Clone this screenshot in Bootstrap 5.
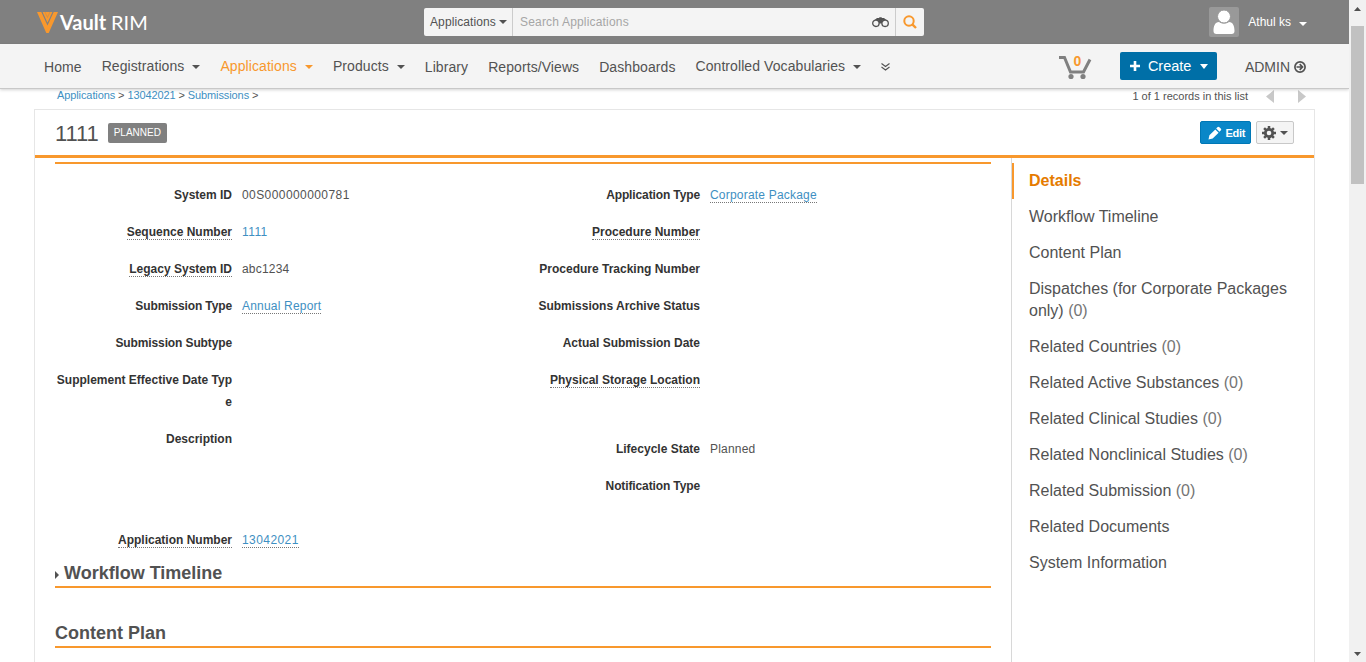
<!DOCTYPE html>
<html lang="en">
<head>
<meta charset="utf-8">
<meta name="viewport" content="width=device-width, initial-scale=1">
<title>Vault RIM - 1111</title>
<link href="https://cdn.jsdelivr.net/npm/bootstrap@5.3.0/dist/css/bootstrap.min.css" rel="stylesheet">
<style>
  body{font-family:"Liberation Sans",Arial,sans-serif;font-size:12px;line-height:22px;color:#525252;height:100vh;overflow:hidden;background:#fff}
  a{color:#3e8fc2;text-decoration:none}
  svg{display:block;flex:none}
  .caret{width:0;height:0;border:4px solid transparent;border-top-color:currentColor;border-bottom:0;flex:none}
  .topbar{height:44px;background:#808080;padding:0 42px 0 37px}
  .logo-text{font:700 20px/24px Lato,sans-serif;color:#fff;margin-left:2px;width:90px;white-space:nowrap}
  .logo-text span{font-weight:400}
  .search-box{width:500px;height:28px;background:#f4f4f4;border-radius:2px;margin-left:274px}
  .search-type{width:89px;padding-left:6px;border-right:1px solid #ccc;letter-spacing:.1px}
  .search-type .caret{margin-left:3px}
  .search-hint{color:#a6a6a6;padding-left:7px;letter-spacing:.18px}
  .search-go{width:29px;border-left:1px solid #ccc}
  .binoculars{margin-right:6px}
  .avatar{width:30px;height:30px;background:#999;border-radius:2px;overflow:hidden;margin-right:9px}
  .mainnav{height:45px;background:#f4f4f4;border-bottom:1px solid #c8c8c8;box-shadow:0 1px 3px rgba(0,0,0,.18);padding:2px 43px 0 44px;font-size:14px;position:relative}
  .mainnav .nav{column-gap:20px;letter-spacing:.08px}
  .mainnav .nav-link{padding:0;color:#525252;line-height:20px}
  .mainnav .has-menu{margin-top:-2px}
  .mainnav .has-menu .caret{margin-left:8px;margin-top:2px}
  .mainnav .nav-link.active{color:#f8982d}
  .create{height:28px;width:97px;background:#006fa7;color:#fff;border:0;border-radius:2px;font-size:14.5px;line-height:20px;padding:0 9px 0 10px;margin:-2px 28px 0}
  .create .caret{border-width:5px 4.500px 0}
  .crumbs{font-size:11px;height:20px;line-height:14px;padding:0 43px 0 57px}
  .crumbs nav{letter-spacing:-.1px;margin-top:-1px}
  .crumbs svg{margin-left:18px}
  .record{margin:0 34px;border:1px solid #e6e6e6;border-bottom:0}
  .record-head{height:48px;border-bottom:3px solid #f8982d;padding:0 20px}
  .record-head h1{font-size:22px;line-height:26px;font-weight:400;margin:2px 0 0;letter-spacing:-.1px}
  .state{background:#808080;color:#fff;font-size:10px;line-height:20px;font-weight:400;padding:0 6px;border-radius:2px;margin-left:9px}
  .edit-btn{width:51px;height:23px;background:#0a87c8;border:1px solid #0077b5;border-radius:2px;color:#fff;font-size:11px;font-weight:700;padding:0 5px 0 7px;letter-spacing:-.3px;margin-right:5px}
  .gear-btn{width:38px;height:23px;background:#f4f4f4;border:1px solid #c8c8c8;border-radius:2px;color:#525252;padding:0 5px}
  .record-main{width:936px;margin-left:20px;flex:none}
  .fields{border-top:2px solid #f8982d;margin-top:4px;padding-top:20px;height:398px}
  .field{display:flex;padding-bottom:15px}
  .field dt{width:177px;flex:none;text-align:right;color:#333;word-break:break-all;font-weight:700}
  .field dt.snug{letter-spacing:-.12px}
  .field dd{margin:0 0 0 10px;letter-spacing:.2px}
  .field dd.num{letter-spacing:.42px}
  .tip{display:inline-block;line-height:13px;border-bottom:1px dotted #777}
  .gap-life{margin-top:32px}
  .gap-app{margin-top:64px}
  .section-title{font-size:18px;line-height:24px;font-weight:700;margin:0;border-bottom:2px solid #f8982d;color:#525252;padding:1px 0}
  .section-title + .section-title{margin-top:32px}
  .fold{width:0;height:0;border:4px solid transparent;border-left-color:#525252;border-right:0;margin:3px 5px 0 0}
  .toc{border-left:1px solid #d8d8d8;margin-left:20px;padding-top:5px;font-size:16px;height:504px}
  .toc a{display:block;color:#525252;padding:7px 12px 7px 15px;border-left:2px solid transparent}
  .toc a.active{color:#e57b00;font-weight:700;border-color:#f8982d}
  .toc span{color:#757575}
  .scroll{width:17px;background:#f1f1f1;padding:7px 2px 6px}
  .thumb{width:13px;height:158px;background:#c1c1c1;margin-top:15px}
</style>
</head>
<body class="d-flex">
<div class="flex-grow-1 overflow-hidden">
  <header class="topbar d-flex align-items-center">
    <svg width="21" height="21" viewBox="0 0 21 21" fill="#f8982d"><path d="M0 0h4.300l6.200 13.500L16.700 0H21l-9.300 21H9.300z"/><path d="M5.600 0h9.800l-4.900 10.800z"/><path d="M8 0l2.500 5.500L13 0" fill="none" stroke="#808080" stroke-width=".5" opacity=".6"/></svg>
    <div class="logo-text">Vault <span>RIM</span></div>
    <div class="search-box d-flex align-items-center">
      <div class="search-type d-flex align-items-center h-100">Applications<i class="caret"></i></div>
      <div class="search-hint flex-grow-1">Search Applications</div>
      <svg class="binoculars" width="17" height="11" viewBox="0 0 17 11" fill="none" stroke="#525252"><path d="M2 3.500 5 1h2l.5-.700h2L10 1h2l3 2.500-4 5-1-2H7l-1 2z" fill="#525252" stroke="none"/><circle cx="3.900" cy="6.300" r="3.200" fill="#f4f4f4" stroke-width="1.300"/><circle cx="13.100" cy="6.300" r="3.200" fill="#f4f4f4" stroke-width="1.300"/></svg>
      <div class="search-go h-100 d-flex align-items-center justify-content-center"><svg width="14" height="14" viewBox="0 0 14 14" fill="none" stroke="#f8982d" stroke-width="2"><circle cx="6" cy="6" r="4.700"/><path d="m9.300 9.300 3.700 3.700" stroke-width="2.400"/></svg></div>
    </div>
    <div class="d-flex align-items-center ms-auto text-white">
      <div class="avatar"><svg width="30" height="30" viewBox="0 0 30 30"><path d="M4.500 24c0-5 1.500-9 5.500-9 3 2 7 2 10 0 4 0 5.500 4 5.500 9 0 2-1 3-3 3h-15c-2 0-3-1-3-3z" fill="#fff"/><circle cx="15" cy="9.500" r="6.500" fill="#fff" stroke="#999"/></svg></div>
      <span>Athul ks</span><i class="caret ms-2 mt-1"></i>
    </div>
  </header>
  <div class="mainnav d-flex align-items-center">
    <nav class="nav align-items-center flex-nowrap">
      <a class="nav-link" href="#">Home</a>
      <a class="nav-link has-menu d-flex align-items-center" href="#">Registrations<i class="caret"></i></a>
      <a class="nav-link has-menu d-flex align-items-center active" href="#">Applications<i class="caret"></i></a>
      <a class="nav-link has-menu d-flex align-items-center" href="#">Products<i class="caret"></i></a>
      <a class="nav-link" href="#">Library</a>
      <a class="nav-link" href="#">Reports/Views</a>
      <a class="nav-link" href="#">Dashboards</a>
      <a class="nav-link has-menu d-flex align-items-center" href="#">Controlled Vocabularies<i class="caret"></i></a>
      <a class="nav-link" href="#" aria-label="More"><svg width="9" height="8" viewBox="0 0 9 8" fill="none" stroke="#525252" stroke-width="1.100"><path d="m.5.500 4 3 4-3M.5 4l4 3 4-3"/></svg></a>
    </nav>
    <div class="d-flex align-items-center ms-auto">
      <svg width="34" height="26" viewBox="0 0 34 26"><path d="M1 3.500h5.500L12.500 18h13L32 5.500" fill="none" stroke="#808080" stroke-width="3"/><circle cx="13" cy="22.500" r="2.600" fill="#808080"/><circle cx="25" cy="22.500" r="2.600" fill="#808080"/><text x="19.500" y="11.500" text-anchor="middle" font-size="14" font-weight="700" fill="#f8982d">0</text></svg>
      <button class="create d-flex align-items-center"><svg width="10" height="10" viewBox="0 0 10 10" fill="none" stroke="#fff" stroke-width="2.600"><path d="M5 0v10M0 5h10"/></svg><span class="ms-2">Create</span><i class="caret ms-auto"></i></button>
      <a class="nav-link d-flex align-items-center" href="#">ADMIN<svg class="ms-1" width="12" height="12" viewBox="0 0 12 12" fill="none" stroke="#525252" stroke-width="1.700"><circle cx="6" cy="6" r="5.100"/><path d="M2.500 6h5M5.700 3.200 8.500 6 5.700 8.800"/></svg></a>
    </div>
  </div>
  <div class="crumbs d-flex justify-content-between">
    <nav><a href="#">Applications</a> &gt; <a href="#">13042021</a> &gt; <a href="#">Submissions</a> &gt;</nav>
    <div class="d-flex"><span class="pager">1 of 1 records in this list</span>
      <svg width="40" height="14" viewBox="0 0 40 14" fill="#c8c8c8"><path d="M8 1v13L0 7.500zM32 1v13l8-6.500z"/></svg></div>
  </div>
  <main class="record">
    <div class="record-head d-flex align-items-center">
      <h1>1111</h1><span class="state">PLANNED</span>
      <button class="edit-btn d-flex align-items-center justify-content-between ms-auto"><svg width="14" height="14" viewBox="0 0 14 14" fill="#fff"><path d="M.5 13.500l.9-4.200 5.900-5.900 3.300 3.300-5.900 5.900zM8.200 2.500l1.200-1.200c.7-.7 1.300-.7 2 0l1.300 1.300c.7.7.7 1.300 0 2l-1.200 1.200z"/></svg>Edit</button>
      <button class="gear-btn d-flex align-items-center justify-content-between"><svg width="14" height="14" viewBox="0 0 14 14"><circle cx="7" cy="7" r="3.700" fill="none" stroke="#525252" stroke-width="2.800"/><path d="M7 0v3M7 11v3M0 7h3M11 7h3M2.100 2.100l2 2M9.900 9.900l2 2M2.100 11.900l2-2M9.900 4.100l2-2" stroke="#525252" stroke-width="2.500"/></svg><i class="caret"></i></button>
    </div>
    <div class="d-flex">
      <div class="record-main">
        <div class="fields"><div class="row g-0">
          <dl class="col-6 mb-0">
            <div class="field"><dt>System ID</dt><dd class="num">00S000000000781</dd></div>
            <div class="field"><dt><span class="tip">Sequence Number</span></dt><dd class="num"><a href="#">1111</a></dd></div>
            <div class="field"><dt><span class="tip">Legacy System ID</span></dt><dd>abc1234</dd></div>
            <div class="field"><dt class="snug">Submission Type</dt><dd><a class="tip" href="#">Annual Report</a></dd></div>
            <div class="field"><dt class="snug">Submission Subtype</dt><dd></dd></div>
            <div class="field"><dt>Supplement Effective Date Type</dt><dd></dd></div>
            <div class="field"><dt>Description</dt><dd></dd></div>
            <div class="field gap-app"><dt><span class="tip">Application Number</span></dt><dd class="num"><a class="tip" href="#">13042021</a></dd></div>
          </dl>
          <dl class="col-6 mb-0">
            <div class="field"><dt class="snug">Application Type</dt><dd><a class="tip" href="#">Corporate Package</a></dd></div>
            <div class="field"><dt><span class="tip">Procedure Number</span></dt><dd></dd></div>
            <div class="field"><dt>Procedure Tracking Number</dt><dd></dd></div>
            <div class="field"><dt>Submissions Archive Status</dt><dd></dd></div>
            <div class="field"><dt>Actual Submission Date</dt><dd></dd></div>
            <div class="field"><dt><span class="tip">Physical Storage Location</span></dt><dd></dd></div>
            <div class="field gap-life"><dt>Lifecycle State</dt><dd>Planned</dd></div>
            <div class="field"><dt class="snug">Notification Type</dt><dd></dd></div>
          </dl>
        </div></div>
        <h2 class="section-title d-flex align-items-center"><i class="fold"></i>Workflow Timeline</h2>
        <h2 class="section-title">Content Plan</h2>
      </div>
      <nav class="toc flex-grow-1">
        <a class="active" href="#">Details</a>
        <a href="#">Workflow Timeline</a>
        <a href="#">Content Plan</a>
        <a href="#">Dispatches (for Corporate Packages only) <span>(0)</span></a>
        <a href="#">Related Countries <span>(0)</span></a>
        <a href="#">Related Active Substances <span>(0)</span></a>
        <a href="#">Related Clinical Studies <span>(0)</span></a>
        <a href="#">Related Nonclinical Studies <span>(0)</span></a>
        <a href="#">Related Submission <span>(0)</span></a>
        <a href="#">Related Documents</a>
        <a href="#">System Information</a>
      </nav>
    </div>
  </main>
</div>
<div class="scroll d-flex flex-column align-items-center">
  <svg width="7" height="4" viewBox="0 0 7 4" fill="#505050"><path d="M0 4 3.500 0 7 4z"/></svg>
  <div class="thumb"></div>
  <svg class="mt-auto" width="7" height="4" viewBox="0 0 7 4" fill="#505050"><path d="M0 0h7L3.500 4z"/></svg>
</div>
<script src="https://cdn.jsdelivr.net/npm/bootstrap@5.3.0/dist/js/bootstrap.bundle.min.js"></script>
</body>
</html>
